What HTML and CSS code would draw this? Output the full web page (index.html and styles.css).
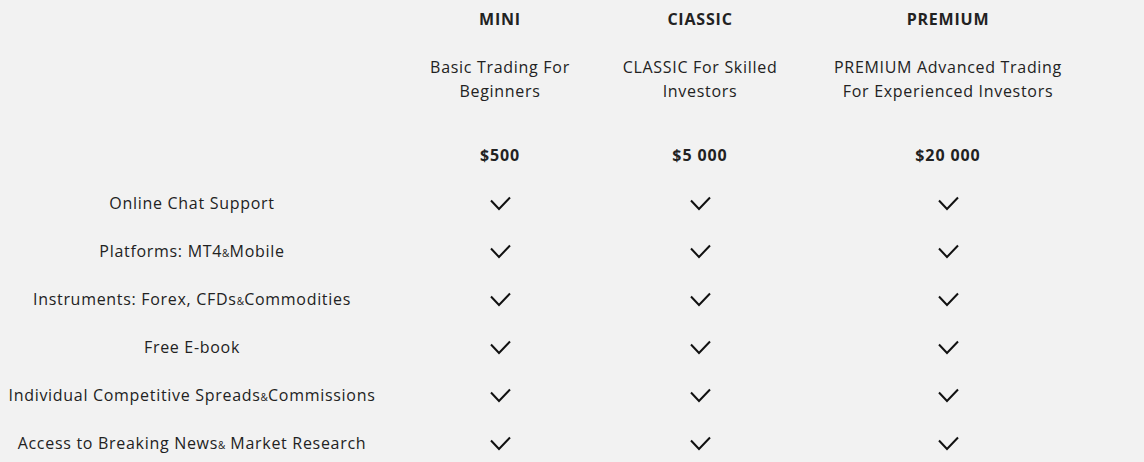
FILE: index.html
```html
<!DOCTYPE html>
<html>
<head>
<meta charset="utf-8">
<link rel="stylesheet" href="styles.css">
</head>
<body>
<div class="table">
  <div class="cell label head"></div>
  <div class="cell head">MINI</div>
  <div class="cell head">CIASSIC</div>
  <div class="cell head">PREMIUM</div>

  <div class="cell label desc"></div>
  <div class="cell desc">Basic Trading For<br>Beginners</div>
  <div class="cell desc">CLASSIC For Skilled<br>Investors</div>
  <div class="cell desc">PREMIUM Advanced Trading<br>For Experienced Investors</div>

  <div class="cell label price"></div>
  <div class="cell price">$500</div>
  <div class="cell price">$5 000</div>
  <div class="cell price">$20 000</div>

  <div class="cell label">Online Chat Support</div>
  <div class="cell"><svg class="check" viewBox="0 0 21 15"><polyline points="1,4.5 9,13 20,1.5"/></svg></div>
  <div class="cell"><svg class="check" viewBox="0 0 21 15"><polyline points="1,4.5 9,13 20,1.5"/></svg></div>
  <div class="cell"><svg class="check" viewBox="0 0 21 15"><polyline points="1,4.5 9,13 20,1.5"/></svg></div>

  <div class="cell label">Platforms: MT4<span class="amp">&amp;</span>Mobile</div>
  <div class="cell"><svg class="check" viewBox="0 0 21 15"><polyline points="1,4.5 9,13 20,1.5"/></svg></div>
  <div class="cell"><svg class="check" viewBox="0 0 21 15"><polyline points="1,4.5 9,13 20,1.5"/></svg></div>
  <div class="cell"><svg class="check" viewBox="0 0 21 15"><polyline points="1,4.5 9,13 20,1.5"/></svg></div>

  <div class="cell label">Instruments: Forex, CFDs<span class="amp">&amp;</span>Commodities</div>
  <div class="cell"><svg class="check" viewBox="0 0 21 15"><polyline points="1,4.5 9,13 20,1.5"/></svg></div>
  <div class="cell"><svg class="check" viewBox="0 0 21 15"><polyline points="1,4.5 9,13 20,1.5"/></svg></div>
  <div class="cell"><svg class="check" viewBox="0 0 21 15"><polyline points="1,4.5 9,13 20,1.5"/></svg></div>

  <div class="cell label">Free E-book</div>
  <div class="cell"><svg class="check" viewBox="0 0 21 15"><polyline points="1,4.5 9,13 20,1.5"/></svg></div>
  <div class="cell"><svg class="check" viewBox="0 0 21 15"><polyline points="1,4.5 9,13 20,1.5"/></svg></div>
  <div class="cell"><svg class="check" viewBox="0 0 21 15"><polyline points="1,4.5 9,13 20,1.5"/></svg></div>

  <div class="cell label">Individual Competitive Spreads<span class="amp">&amp;</span>Commissions</div>
  <div class="cell"><svg class="check" viewBox="0 0 21 15"><polyline points="1,4.5 9,13 20,1.5"/></svg></div>
  <div class="cell"><svg class="check" viewBox="0 0 21 15"><polyline points="1,4.5 9,13 20,1.5"/></svg></div>
  <div class="cell"><svg class="check" viewBox="0 0 21 15"><polyline points="1,4.5 9,13 20,1.5"/></svg></div>

  <div class="cell label">Access to Breaking News<span class="amp">&amp;</span> Market Research</div>
  <div class="cell"><svg class="check" viewBox="0 0 21 15"><polyline points="1,4.5 9,13 20,1.5"/></svg></div>
  <div class="cell"><svg class="check" viewBox="0 0 21 15"><polyline points="1,4.5 9,13 20,1.5"/></svg></div>
  <div class="cell"><svg class="check" viewBox="0 0 21 15"><polyline points="1,4.5 9,13 20,1.5"/></svg></div>
</div>
</body>
</html>
```
FILE: styles.css
```css
html, body {
  margin: 0;
  padding: 0;
  background: #f2f2f2;
}
body {
  font-family: "Open Sans", "Liberation Sans", sans-serif;
  font-size: 16px;
  color: #222222;
  overflow: hidden;
}
.table {
  display: grid;
  grid-template-columns: 384px 232px 168px 328px;
}
.cell {
  text-align: center;
  line-height: 24px;
  height: 24px;
  padding: 12px 0;
  letter-spacing: 0.7px;
  white-space: nowrap;
  display: flex;
  flex-direction: column;
  align-items: center;
  justify-content: center;
}
.head {
  font-weight: 700;
  letter-spacing: 0.8px;
  padding: 7px 0 12px;
}
.desc {
  height: 48px;
  padding: 12px 0;
}
.price {
  font-weight: 700;
  letter-spacing: 0.9px;
  padding: 28px 0 12px;
}
.label {
  display: block;
}
.amp {
  font-size: 10px;
  line-height: 1;
  letter-spacing: 0.2px;
}
.check {
  width: 21px;
  height: 15px;
  display: block;
  fill: none;
  stroke: #111111;
  stroke-width: 2;
}
```
